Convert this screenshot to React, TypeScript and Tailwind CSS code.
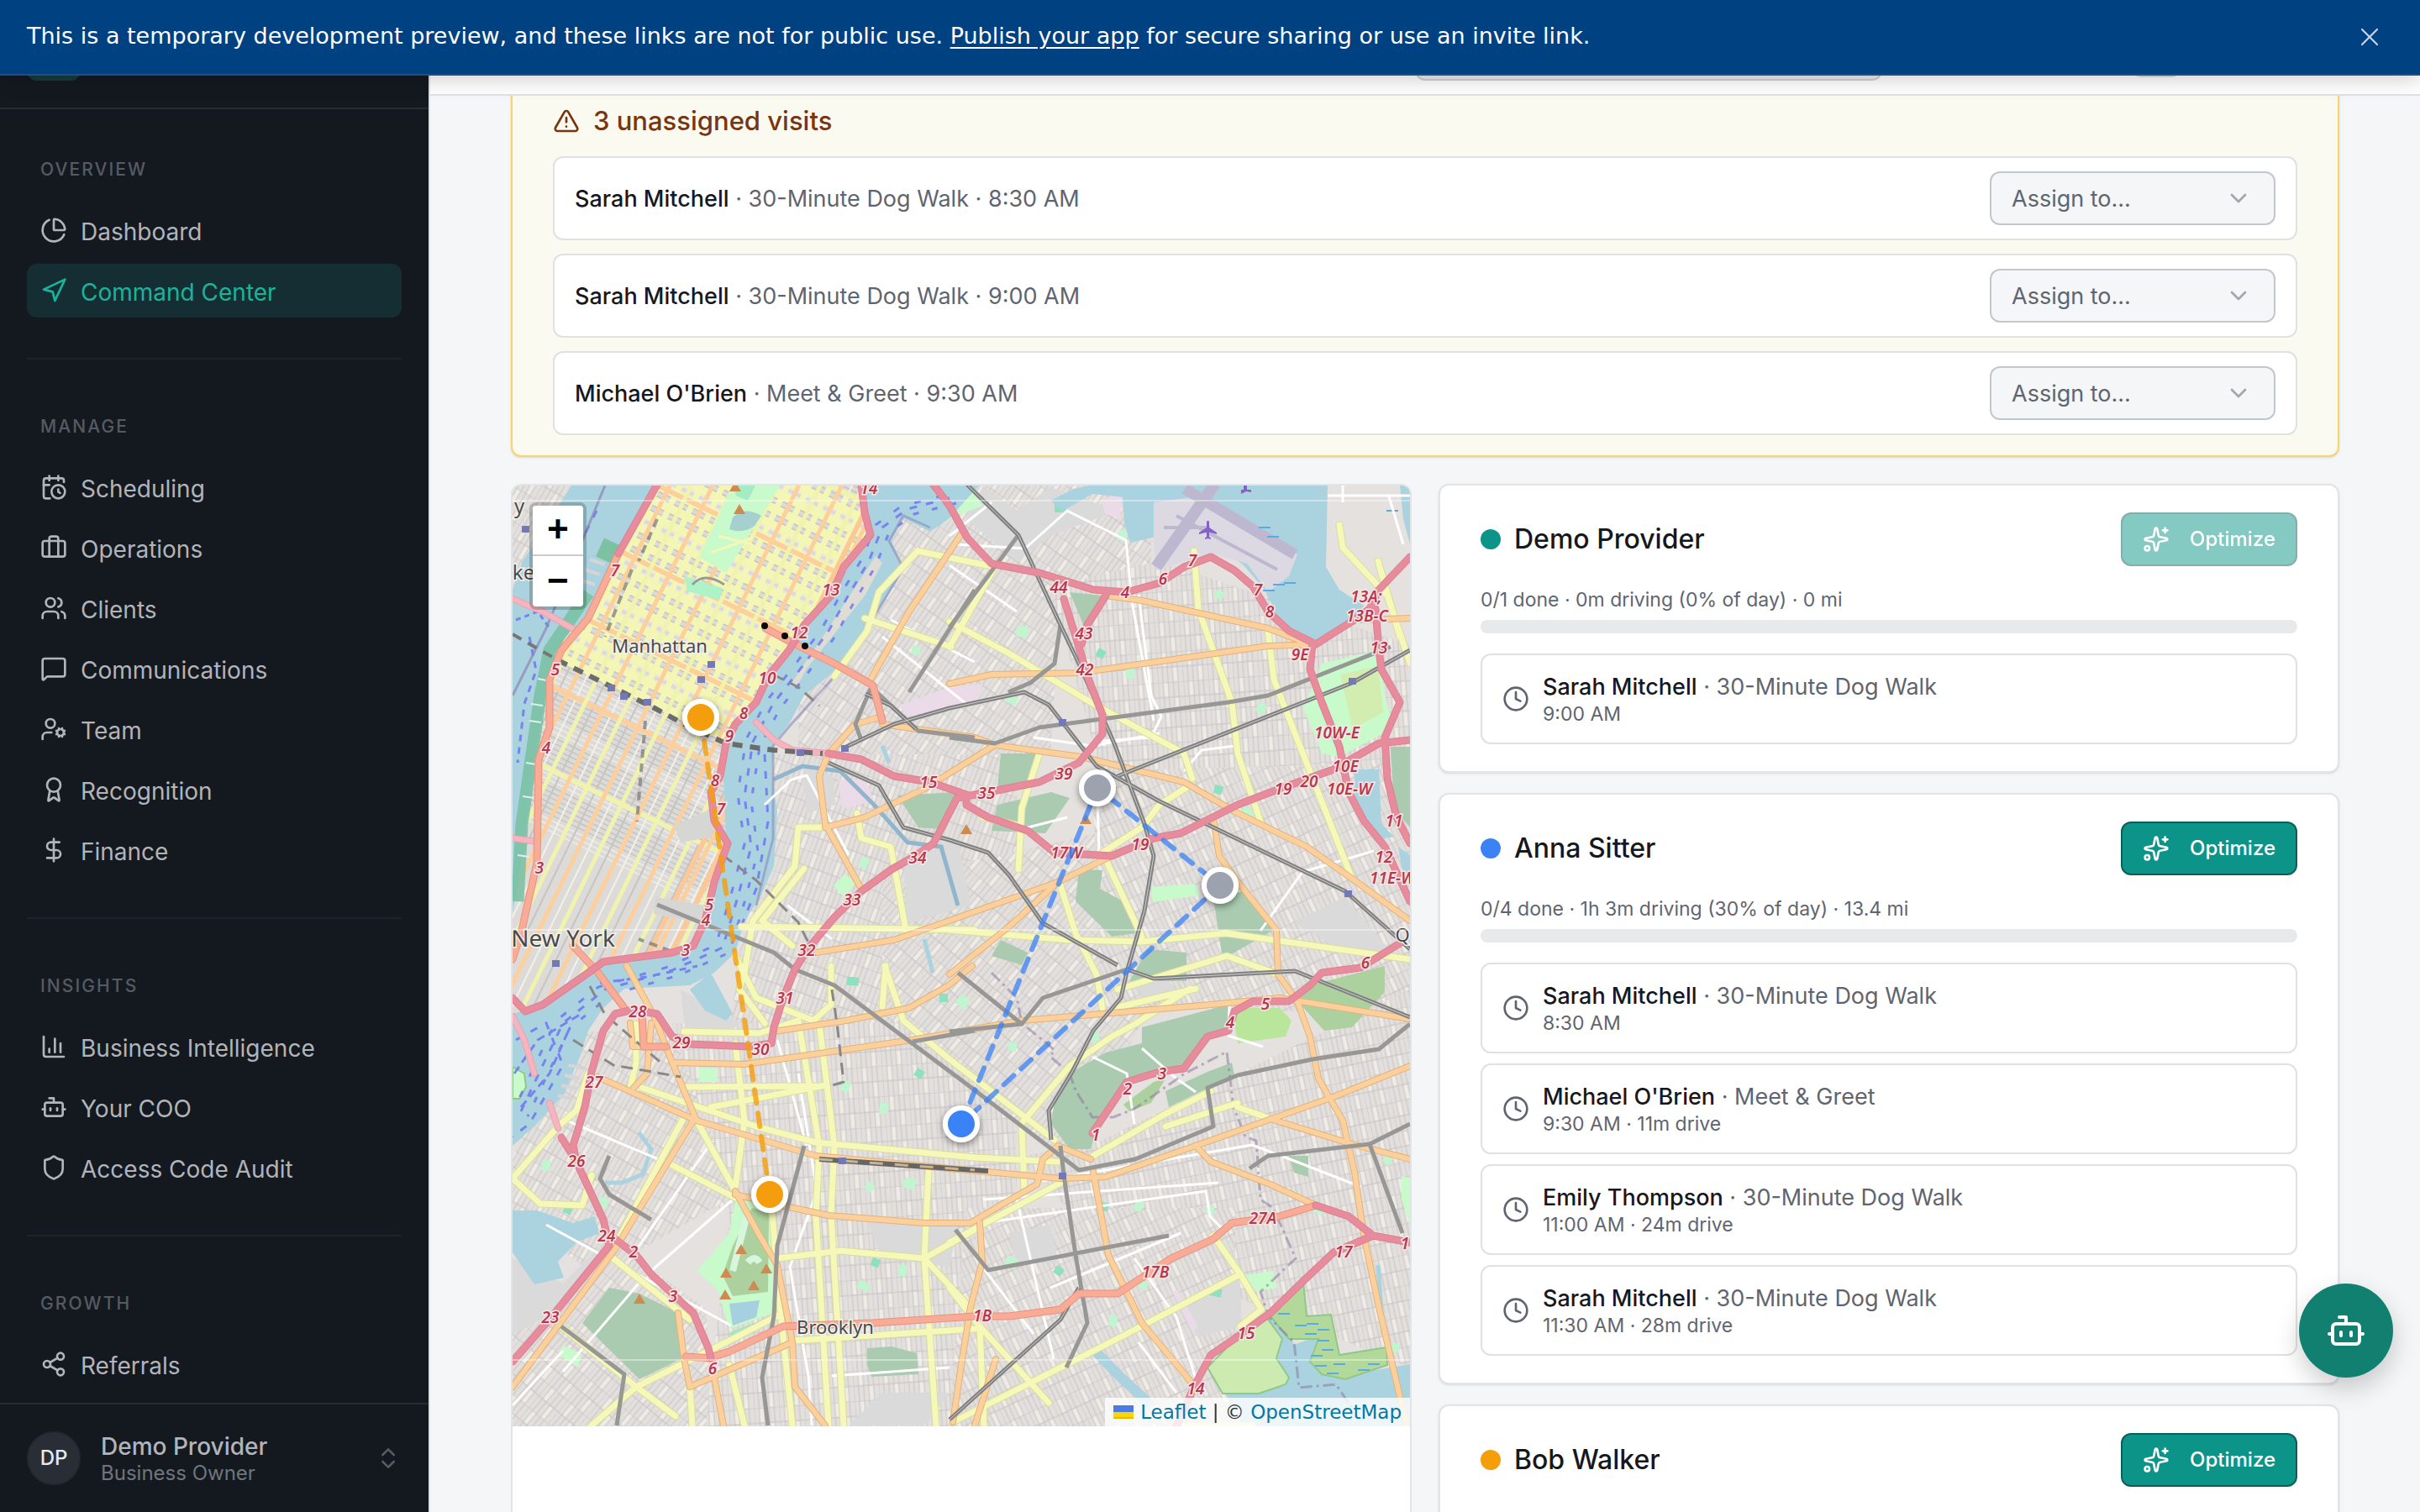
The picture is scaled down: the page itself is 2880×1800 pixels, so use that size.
import { useState } from "react";
import {
  Award, Bot, Briefcase, CalendarClock, ChartColumn, ChartPie, ChevronDown, ChevronsUpDown, Clock, DollarSign,
  MessageSquare, Navigation, Share2, Shield, Sparkles, TriangleAlert, UserCog, Users, X,
} from "lucide-react";

const NAV = [
  { title: "Overview", items: [
    { label: "Dashboard", icon: ChartPie },
    { label: "Command Center", icon: Navigation },
  ] },
  { title: "Manage", items: [
    { label: "Scheduling", icon: CalendarClock },
    { label: "Operations", icon: Briefcase },
    { label: "Clients", icon: Users },
    { label: "Communications", icon: MessageSquare },
    { label: "Team", icon: UserCog },
    { label: "Recognition", icon: Award },
    { label: "Finance", icon: DollarSign },
  ] },
  { title: "Insights", items: [
    { label: "Business Intelligence", icon: ChartColumn },
    { label: "Your COO", icon: Bot },
    { label: "Access Code Audit", icon: Shield },
  ] },
  { title: "Growth", items: [
    { label: "Referrals", icon: Share2 },
  ] },
];

const UNASSIGNED = [
  { client: "Sarah Mitchell", service: "30-Minute Dog Walk", time: "8:30 AM" },
  { client: "Sarah Mitchell", service: "30-Minute Dog Walk", time: "9:00 AM" },
  { client: "Michael O'Brien", service: "Meet & Greet", time: "9:30 AM" },
];

const PROVIDERS = [
  {
    name: "Demo Provider", dot: "bg-[#0d9488]", canOptimize: false,
    summary: "0/1 done · 0m driving (0% of day) · 0 mi",
    visits: [{ client: "Sarah Mitchell", service: "30-Minute Dog Walk", meta: "9:00 AM" }],
  },
  {
    name: "Anna Sitter", dot: "bg-[#3b82f6]", canOptimize: true,
    summary: "0/4 done · 1h 3m driving (30% of day) · 13.4 mi",
    visits: [
      { client: "Sarah Mitchell", service: "30-Minute Dog Walk", meta: "8:30 AM" },
      { client: "Michael O'Brien", service: "Meet & Greet", meta: "9:30 AM · 11m drive" },
      { client: "Emily Thompson", service: "30-Minute Dog Walk", meta: "11:00 AM · 24m drive" },
      { client: "Sarah Mitchell", service: "30-Minute Dog Walk", meta: "11:30 AM · 28m drive" },
    ],
  },
  { name: "Bob Walker", dot: "bg-[#f59e0b]", canOptimize: true, summary: "", visits: [] },
];

// Map geometry, in units of the map's 1068 x 1120 view box

const MANHATTAN =
  "172,0 415,0 424,51 397,97 369,143 333,196 297,242 272,277 258,311 251,349 254,422 240,479 226,537 204,556 108,571 36,618 0,629 0,510 12,442 26,327 44,220 62,181 97,147 130,78";

const WATER = [
  "70,0 172,0 130,78 97,147 62,181 44,220 26,327 12,442 0,510 0,124 12,90",
  "415,-1 424,51 397,97 369,143 333,196 297,242 272,277 258,311 251,349 254,422 240,479 226,537 204,556 108,571 86,583 36,618 0,629 0,786 26,763 61,725 79,683 90,649 108,622 133,599 211,595 240,580 265,556 276,518 294,491 311,453 315,388 308,345 311,307 329,284 347,250 394,212 419,173 444,135 465,101 451,66 465,39 497,55 520,39 556,-1",
  "0,863 29,863 72,878 97,870 104,890 76,901 54,924 61,943 26,951 0,913",
  "211,600 236,580 262,629 254,637 229,625",
  "725,-1 970,-1 968,97 984,124 1013,143 999,166 956,185 913,162 895,124 870,95 850,80 770,60 735,68 728,45",
  "640,18 668,4 690,-1 725,-1 728,14 690,10 655,30",
  "899,986 920,1000 930,1023 960,1012 950,1045 975,1062 1068,1046 1068,1120 870,1120 835,1055",
  "1002,338 1031,338 1034,403 1049,418 1027,422 1002,376",
  "1056,0 1068,0 1068,70 1060,40",
  "1054,430 1068,440 1068,470 1058,455",
];

const PARKS = [
  { fill: "#c8facc", pts: "262,0 318,0 254,104 222,85" },
  { fill: "#b5f0c0", pts: "204,108 254,120 247,135 211,124" },
  { fill: "#c8facc", pts: "531,35 560,24 545,5 511,45" },
  { fill: "#aacbaf", pts: "458,369 529,365 508,409 483,407" },
  { fill: "#aacbaf", pts: "581,319 627,319 616,353 577,361" },
  { fill: "#aacbaf", pts: "577,380 641,365 663,372 634,414 570,411" },
  { fill: "#aacbaf", pts: "674,457 702,458 699,480 734,499 741,533 713,537 670,495" },
  { fill: "#aacbaf", pts: "663,127 702,131 681,170" },
  { fill: "#aacbaf", pts: "834,491 870,483 906,529 845,564" },
  { fill: "#aacbaf", pts: "756,552 802,556 802,590 734,590" },
  { fill: "#aacbaf", pts: "581,541 613,556 606,571 570,560" },
  { fill: "#c8facc", pts: "941,265 963,212 1031,196 1038,250 1049,288 984,323 963,319" },
  { fill: "#d3edb0", pts: "985,225 1030,215 1036,270 1000,290" },
  { fill: "#aacbaf", pts: "1045,311 1068,311 1068,407 1049,384" },
  { fill: "#aacbaf", pts: "749,645 852,618 852,649 827,656 802,691 734,706 699,756 688,790 663,790 641,760 645,733 666,698 706,675 749,664" },
  { fill: "#aacbaf", pts: "777,721 827,698 856,687 859,702 781,740" },
  { fill: "#b9e69b", pts: "856,622 913,622 927,637 920,656 863,664" },
  { fill: "#add19e", pts: "949,595 1038,572 1038,603 999,645 966,649 934,614" },
  { fill: "#add19e", pts: "727,737 763,710 777,706 760,735 734,745" },
  { fill: "#aacbaf", pts: "924,798 947,798 947,823 930,818" },
  { fill: "#c8facc", pts: "265,851 308,851 311,985 258,1004 244,958 219,935 258,890" },
  { fill: "#add19e", pts: "285,860 305,866 304,960 262,965 250,940 262,905" },
  { fill: "#a0e8c0", pts: "258,1008 290,996 294,1004 262,1016" },
  { fill: "#aacbaf", pts: "115,955 151,962 197,985 202,1039 151,1064 83,997" },
  { fill: "#aacbaf", pts: "422,1027 451,1025 481,1033 483,1058 427,1061 422,1047" },
  { fill: "#c8facc", pts: "872,940 905,935 910,955 885,960" },
  { fill: "#c8facc", pts: "382,476 396,462 408,474 394,490" },
  { fill: "#c8facc", pts: "222,693 244,693 244,710 222,710" },
  { fill: "#c8facc", pts: "760,478 812,474 818,488 762,496" },
  { fill: "#c8facc", pts: "60,1024 82,1034 78,1050 56,1036" },
  { fill: "#c8facc", pts: "1058,822 1068,824 1068,880 1058,850" },
];

// shoreline greens that sit over the bay
const SHORE = [
  { fill: "#b2d99a", pts: "902,989 941,947 945,989 974,987 984,1035 1040,1026 1041,1047 991,1064 963,1058 949,1043 959,1016 924,1016" },
  { fill: "#cdebb0", pts: "895,987 916,1016 909,1039 924,1062 920,1070 888,1081 845,1081 827,1050 856,1020" },
  { fill: "#c8facc", pts: "0,692 14,700 16,716 8,730 0,730" },
];

// small greens scattered through the neighbourhoods
const SQUARES: [number, number][] = [
  [650, 27], [726, 58], [841, 130], [605, 172], [700, 200], [735, 222], [592, 254], [892, 264], [840, 362], [873, 388],
  [480, 196], [419, 448], [403, 590], [397, 714], [425, 835], [471, 829], [484, 700], [442, 740], [416, 952], [464, 933],
  [432, 925], [535, 612], [595, 668], [693, 655], [700, 858], [746, 856], [830, 862], [592, 923], [650, 935], [715, 993],
  [747, 950], [40, 808], [66, 862], [104, 852], [120, 408], [197, 417], [835, 960], [1043, 800], [1050, 1026], [958, 858], [513, 610],
];

const GREY_AREAS = [
  "465,440 530,420 545,500 470,520", "640,2 720,30 640,60 600,30", "200,600 270,640 260,650 205,645", "420,870 530,880 520,930 440,920",
  "0,920 60,950 110,900 60,980 0,1010", "800,980 865,942 868,1000 815,1014", "590,890 640,880 650,925 600,925", "735,580 770,576 790,600 750,612",
  "440,1080 520,1080 490,1119 400,1119", "560,0 640,60 600,90 540,40", "930,520 990,490 1050,560 980,550", "345,335 380,345 385,380 350,390",
];

const DISTRICTS = [
  { grid: "url(#grid-35)", pts: "400,0 760,0 760,120 650,170 640,320 340,320 340,250" },
  { grid: "url(#grid-n4)", pts: "640,120 770,90 1068,190 1068,350 700,340" },
  { grid: "url(#grid-20)", pts: "300,320 600,320 600,560 440,640 260,640" },
  { grid: "url(#grid-40)", pts: "440,470 760,400 760,620 660,800 440,650" },
  { grid: "url(#grid-n25)", pts: "690,340 1068,330 1068,630 700,620" },
  { grid: "url(#grid-n4)", pts: "190,640 470,640 600,760 600,870 220,860" },
  { grid: "url(#grid-30)", pts: "60,650 190,650 265,845 100,940 0,870 0,800" },
  { grid: "url(#grid-40)", pts: "0,1000 120,900 230,980 240,1120 0,1120" },
  { grid: "url(#grid-n4)", pts: "260,850 560,850 560,1120 230,1120" },
  { grid: "url(#grid-n12)", pts: "600,800 700,780 1068,600 1068,1050 700,900" },
  { grid: "url(#grid-n25)", pts: "540,860 860,860 860,1120 520,1120" },
  { grid: "url(#grid-n12)", pts: "940,860 1068,860 1068,1040 950,990" },
  { grid: "url(#grid-30)", pts: "0,0 70,0 12,90 0,124" },
];

const SECONDARY = [
  "811,78 816,147 856,258 863,319 891,403", "899,173 906,231 999,468", "520,162 591,200 688,258 799,319 809,349",
  "806,357 770,380 749,407 702,437 749,537", "627,319 606,384 602,457", "652,476 670,533 695,582 702,622",
  "520,529 663,541 749,543 849,533 1068,564", "984,47 988,74 1041,131 1068,212", "482,78 574,97 520,192", "419,158 522,192",
  "383,227 422,173 436,127 482,78", "372,407 340,407 336,453 286,518 276,579", "347,456 297,518 333,548", "272,525 550,529",
  "410,390 415,420 450,430 468,529", "443,572 465,637 520,683 645,779", "154,717 290,763 361,782 550,800 649,805",
  "201,716 361,715", "236,740 372,714", "204,650 294,652 340,637", "265,664 276,756 265,836", "340,637 365,786 361,870 376,1119",
  "365,641 383,786 379,867 394,1119", "265,560 290,610 358,637 379,618 379,572", "315,920 390,911 490,920 550,886",
  "495,817 490,920 504,1119", "490,920 550,985", "333,1018 550,1004", "520,955 556,1001 638,1092", "556,1001 561,1119",
  "524,1115 727,1012 866,939", "520,901 656,828", "834,893 866,939 891,981 866,1001", "606,763 609,840",
  "606,759 663,691 713,656 741,641 806,599", "691,798 777,748 831,721", "777,763 863,735", "716,622 813,599", "863,740 902,754",
  "0,825 54,763 76,744 90,700", "0,825 33,855 83,857 94,821", "111,913 211,993", "204,752 126,897", "254,1020 322,985",
  "308,855 319,985 333,1119", "58,1001 147,1073 194,1108", "94,1119 147,1073 254,1020", "258,1047 276,1119", "211,1073 214,1119",
  "147,641 147,687 140,717", "190,809 265,848", "219,756 265,840", "720,600 850,560 911,582", "1030,90 1056,180",
  "560,395 602,405", "440,620 444,572", "300,640 270,600 276,579", "800,1119 880,1119",
];

const PRIMARY = [
  "520,236 570,225 674,223 899,191 956,189", "706,131 749,137 899,170 949,189", "376,319 365,346 372,403 415,480",
  "440,284 550,300 574,309 677,323 799,353 859,388 945,430 999,468 1068,518", "426,231 472,150 534,58",
  "834,395 841,441 863,472 909,529 911,582 934,614 949,656 959,706 988,756 1002,817 1013,893 1031,978 1056,1085 1064,1120",
  "361,556 454,541 520,518 649,472 713,441", "520,582 591,525 649,472", "372,407 419,395 490,361 574,309",
  "101,704 219,756 361,798 520,813 652,825 706,823 813,786 974,729 1068,691", "813,786 831,805 902,832 956,857",
  "902,754 999,784 1068,802", "136,572 169,633 190,687 219,756", "265,840 294,893 315,928 333,1020 336,1073 372,1119",
  "215,756 122,909 0,1073", "265,844 329,859 376,869 490,878 545,878 577,859 624,832 631,802 649,786 688,802",
  "691,817 709,916 749,997 809,1069", "524,1115 534,1047 545,978 559,924 556,878", "190,687 276,689 476,660 606,637 831,618 913,610 1068,635",
  "311,650 397,637 472,622 519,595 547,572", "197,985 204,1039 211,1073 333,1020", "240,1062 251,1119", "140,640 143,668 183,668",
  "376,319 408,284 440,275", "165,640 160,700 144,717", "1010,160 1068,158", "550,1119 575,1040",
];

const TRUNK = [
  "126,81 90,158 58,196 44,231 44,288 31,326 29,449 11,529 0,564",
  "233,1039 258,1031 322,1001 429,997 550,989 591,989 652,981 674,962 720,962 749,943 784,920 834,897 856,878 913,870 956,857",
  "301,170 329,185 383,212 429,238 440,280", "72,548 101,579 133,622", "154,629 156,668 183,668", "206,1037 240,1039",
];

const MOTORWAY = [
  "172,-1 126,81",
  "415,-1 419,32 426,59 394,97 379,131 347,166 329,196 304,227 290,258 265,284 254,307 247,346 236,365 240,399 256,426 240,472 229,518 215,548 190,556 108,567 86,583 36,618 15,626 0,610",
  "0,1043 47,989 115,905 108,874 76,805 72,786 86,740 94,698 108,649 122,629 144,624 172,629 190,656 211,665 283,668 308,664 311,645 322,610 336,576 351,552 383,514 415,483 451,457 479,441 501,426 529,372 566,365 627,353 674,330 702,296 702,273 684,227 674,192 656,135",
  "376,319 415,326 454,346 497,353 540,368 540,380 566,395 613,411 645,437 713,441 763,420 795,414 863,380 913,361 977,338 1031,307 1068,303",
  "501,-1 520,24 541,62 570,93 627,104 691,124 731,127 770,116 799,97 831,85 859,101 881,120 899,150 924,173 956,189 981,173 999,162 1020,147 1031,124 1068,85",
  "952,189 949,219 963,258 984,311 995,365 1013,399 1038,430 1068,495",
  "1027,147 1031,196 1034,219 1056,258 1038,300 1041,349 1052,395 1068,426",
  "706,131 684,166 677,189",
  "690,771 713,737 731,710 770,698 799,694 827,656 852,649 859,626 881,614 924,614 949,595 963,580 1009,574 1056,545",
  "122,897 147,916 165,939 190,962 215,985 233,1027 236,1039",
  "813,1069 831,1035 859,1016 902,985 941,947 977,913 1024,893 1068,901",
  "1024,893 995,870 956,857", "58,776 76,805", "790,1120 813,1069",
];

const TUNNELS = ["0,135 36,150 76,173", "290,282 311,303 333,315 376,319", "0,632 14,660 26,700", "44,735 54,765", "0,420 30,424"];

const SUBWAY = [
  "520,300 574,307 627,288 852,258 899,250 1045,192", "652,166 645,212 616,235 590,246", "550,124 472,246", "520,169 602,59",
  "429,242 483,292 550,300", "426,242 408,284 415,303", "336,576 383,595 545,716 652,798 674,815 741,802 834,763 827,717 863,702 952,683 1031,671 1068,641",
  "520,650 606,641 631,610 731,576", "652,786 656,821 670,916 684,997 659,1050", "527,886 566,934 781,893",
  "877,813 899,798 1020,784 1068,760", "1020,784 1059,890", "115,798 104,825 115,844 165,874", "347,786 315,905 311,989 297,1062 304,1119",
  "58,1001 133,1058 124,1119", "476,662 550,649", "172,499 311,556 336,576", "606,641 530,580",
];

const RAIL = [
  "541,-1 602,59 652,166 674,212 716,307 752,403 763,441 752,506 731,579 724,610 691,649 666,698 638,744 641,779",
  "397,311 454,284 520,265 609,246 638,261 695,334 770,376 991,483 1068,552", "720,346 999,235 1068,196",
  "376,330 436,357 465,407 520,422 566,437 591,464 631,521 720,571", "731,576 763,587 931,578 1068,633", "674,955 652,993 520,1112",
  "420,248 450,262 480,290",
];

const WHITE_ROADS = [
  "735,127 763,280", "745,130 760,250 772,275 760,300 690,305", "527,70 610,75 660,30 730,65 736,127", "620,300 690,310 770,295",
  "695,340 698,437", "860,310 820,315 799,340", "660,395 602,410", "300,380 332,350 350,345 400,440", "327,500 380,540",
  "315,660 350,786", "340,700 362,840 330,930 352,1060 356,1119", "40,880 260,1000", "62,755 190,809", "120,900 212,765", "140,920 238,780",
  "165,935 262,850", "60,1055 150,950", "0,1095 60,1030", "630,828 880,785 920,800 1010,835", "560,850 840,830", "545,880 825,840 830,870 850,890",
  "640,955 700,930 795,890", "559,930 620,1010", "600,850 644,1040", "740,920 790,990 815,1070", "745,1020 790,1080", "749,670 790,706 813,722",
  "690,680 731,700 740,760", "853,620 852,655 893,668", "970,12 1068,12", "988,20 988,0", "1042,10 1060,70", "520,95 600,150",
  "440,180 540,260", "450,160 550,210", "890,530 940,460 1025,435", "520,60 570,20", "650,320 700,330", "380,1060 520,1050",
];

const TEXTS: { x: number; y: number; t: string }[] = [
  { x: 424, y: 3, t: "14" }, { x: 122, y: 101, t: "7" }, { x: 51, y: 219, t: "5" }, { x: 40, y: 312, t: "4" }, { x: 32, y: 455, t: "3" },
  { x: 379, y: 124, t: "13" }, { x: 341, y: 175, t: "12" }, { x: 303, y: 229, t: "10" }, { x: 275, y: 271, t: "8" }, { x: 258, y: 298, t: "9" },
  { x: 241, y: 351, t: "8" }, { x: 248, y: 385, t: "7" }, { x: 234, y: 499, t: "5" }, { x: 230, y: 517, t: "4" }, { x: 206, y: 553, t: "3" },
  { x: 495, y: 353, t: "15" }, { x: 482, y: 443, t: "34" }, { x: 404, y: 493, t: "33" }, { x: 350, y: 553, t: "32" }, { x: 650, y: 121, t: "44" },
  { x: 729, y: 127, t: "4" }, { x: 774, y: 111, t: "6" }, { x: 809, y: 89, t: "7" }, { x: 887, y: 124, t: "7" }, { x: 901, y: 150, t: "8" },
  { x: 1016, y: 132, t: "13A;" }, { x: 1017, y: 155, t: "13B-C" }, { x: 1031, y: 193, t: "13" }, { x: 680, y: 176, t: "43" }, { x: 681, y: 219, t: "42" },
  { x: 937, y: 201, t: "9E" }, { x: 981, y: 294, t: "10W-E" }, { x: 991, y: 334, t: "10E" }, { x: 948, y: 352, t: "20" }, { x: 917, y: 361, t: "19" },
  { x: 996, y: 361, t: "10E-W" }, { x: 656, y: 343, t: "39" }, { x: 564, y: 366, t: "35" }, { x: 659, y: 437, t: "17W" }, { x: 747, y: 427, t: "19" },
  { x: 1049, y: 399, t: "11" }, { x: 1037, y: 442, t: "12" }, { x: 1047, y: 467, t: "11E-W" }, { x: 1015, y: 568, t: "6" }, { x: 149, y: 626, t: "28" },
  { x: 201, y: 663, t: "29" }, { x: 295, y: 671, t: "30" }, { x: 324, y: 610, t: "31" }, { x: 97, y: 710, t: "27" }, { x: 76, y: 804, t: "26" },
  { x: 112, y: 893, t: "24" }, { x: 144, y: 912, t: "2" }, { x: 191, y: 965, t: "3" }, { x: 45, y: 990, t: "23" }, { x: 238, y: 1051, t: "6" },
  { x: 896, y: 617, t: "5" }, { x: 854, y: 639, t: "4" }, { x: 773, y: 700, t: "3" }, { x: 732, y: 718, t: "2" }, { x: 694, y: 773, t: "1" },
  { x: 893, y: 872, t: "27A" }, { x: 765, y: 936, t: "17B" }, { x: 559, y: 988, t: "1B" }, { x: 989, y: 912, t: "17" }, { x: 873, y: 1009, t: "15" },
  { x: 813, y: 1075, t: "14" }, { x: 1062, y: 902, t: "1" },
];

const PEAKS: [number, number][] = [
  [270, 28], [265, 1], [540, 409], [682, 397], [272, 909], [254, 937], [302, 932], [287, 952], [253, 963], [151, 968],
];

const STATIONS: [number, number][] = [
  [236, 213], [224, 231], [117, 241], [132, 251], [160, 258], [342, 318], [395, 313], [654, 282], [999, 233], [994, 486], [654, 822], [392, 804], [51, 569], [15, 52],
];

const FERRY = "520,15 470,28 440,50 424,90 400,130 375,175 345,215 310,260 286,305 276,370 284,430 268,490 250,550 190,577 110,600 60,640 36,690 10,745";

const MARSH: [number, number][] = [
  [918, 986], [938, 1000], [952, 998], [965, 1005], [950, 1010], [965, 1018], [970, 1029], [957, 1036], [962, 1048], [984, 1046], [1013, 1053], [1025, 1046], [976, 1057],
  [895, 50], [905, 61], [900, 125], [912, 118], [925, 116], [1047, 30],
];

const MARKERS = [
  { x: 224, y: 276, color: "#f59e0b" },
  { x: 306, y: 844, color: "#f59e0b" },
  { x: 534, y: 760, color: "#3b82f6" },
  { x: 842, y: 476, color: "#9ca3af" },
  { x: 696, y: 360, color: "#9ca3af" },
];

// avenues and cross streets of Manhattan, cut to the island's outline
const AVENUES = Array.from({ length: 22 }, (_, i) => i * 23 - 130);
const STREETS = Array.from({ length: 34 }, (_, i) => i * 18 - 150);

function BlockGrid({ id, angle }: { id: string; angle: number }) {
  return (
    <pattern id={id} width="30" height="36" patternUnits="userSpaceOnUse" patternTransform={`rotate(${angle})`}>
      <rect width="30" height="36" fill="#e2dfdd" />
      <rect x="6" y="1" width="6" height="16" fill="#efebe5" />
      <rect x="18" y="19" width="6" height="16" fill="#efebe5" />
      <path d="M0 0V36M6 0V36M12 0V36M18 0V36M24 0V36M0 0H30M0 18H30" stroke="#c6c4c3" strokeWidth="1" fill="none" />
    </pattern>
  );
}

function Roads({ lines, casing, fill, width }: { lines: string[]; casing: string; fill: string; width: number }) {
  return (
    <g fill="none" strokeLinejoin="round" strokeLinecap="round">
      {lines.map(p => <polyline key={`c${p}`} points={p} stroke={casing} strokeWidth={width + 2} />)}
      {lines.map(p => <polyline key={p} points={p} stroke={fill} strokeWidth={width} />)}
    </g>
  );
}

function CityMap() {
  return (
    <svg viewBox="0 0 1068 1120" preserveAspectRatio="xMidYMid slice" className="block h-[1120px] w-full" role="img" aria-label="Visit routes">
      <defs>
        <BlockGrid id="grid-35" angle={35} />
        <BlockGrid id="grid-40" angle={40} />
        <BlockGrid id="grid-30" angle={30} />
        <BlockGrid id="grid-20" angle={20} />
        <BlockGrid id="grid-n4" angle={-4} />
        <BlockGrid id="grid-n12" angle={-12} />
        <BlockGrid id="grid-n25" angle={-25} />
        <clipPath id="island"><polygon points={MANHATTAN} /></clipPath>
        <filter id="pin-shadow" x="-50%" y="-50%" width="200%" height="200%">
          <feDropShadow dx="0" dy="3" stdDeviation="4" floodColor="#000" floodOpacity="0.45" />
        </filter>
      </defs>

      <rect width="1068" height="1120" fill="#e4e1de" />
      {DISTRICTS.map(d => <polygon key={d.pts} points={d.pts} fill={d.grid} />)}
      {GREY_AREAS.map(p => <polygon key={p} points={p} fill="#dadada" />)}
      <polygon points="700,18 728,5 722,40 706,34" fill="#ebdbe8" />
      <polygon points="388,350 420,350 430,375 392,385" fill="#ebdbe8" />
      <polygon points="460,262 520,240 560,236 550,258 470,275" fill="#ebdbe8" />
      <polygon points="785,960 792,958 816,1002 808,1006" fill="#ebdbe8" />
      <polygon points="975,210 1010,200 1014,212 980,222" fill="#ebdbe8" />
      {PARKS.map(p => <polygon key={p.pts} points={p.pts} fill={p.fill} />)}
      {SQUARES.map(([x, y], i) => (
        <rect key={`${x}-${y}`} x={x - 5} y={y - 5} width={i % 3 ? 10 : 14} height={i % 2 ? 13 : 10} fill={i % 4 ? "#c0f5cf" : "#8fe0bf"} transform={`rotate(${(i * 17) % 40} ${x} ${y})`} />
      ))}

      {/* island streets */}
      <g clipPath="url(#island)">
        <polygon points={MANHATTAN} fill="#dddbd8" />
        <g transform="rotate(26 172 300)" fill="none">
          {STREETS.map((y, i) => (
            <path key={y} d={`M-200 ${y}H520M-200 ${y + 6}H520M-200 ${y + 12}H520`} stroke={i % 3 ? "#c6c4c2" : "#efece6"} strokeWidth="1.500" />
          ))}
          {AVENUES.map((x, i) => <path key={x} d={`M${x + 11} -300V800`} stroke={i % 2 ? "#c6c4c2" : "#f4f1ea"} strokeWidth="2" />)}
          {STREETS.filter(y => y > -60 && y < 270).map(y => <path key={y} d={`M-60 ${y}H420`} stroke="#f3f6b4" strokeWidth="10" />)}
          {AVENUES.map(x => <path key={x} d={`M${x + 11} -60V270`} stroke="#f3f6b4" strokeWidth="7" />)}
          {STREETS.filter((_, i) => i % 5 === 0).map(y => <path key={y} d={`M-200 ${y}H520`} stroke={y > 300 || y < 0 ? "#eff3ad" : "#fccf9c"} strokeWidth="6" />)}
          {AVENUES.map((x, i) => <path key={x} d={`M${x} -300V800`} stroke={i % 2 ? "#eff3ad" : "#fccf9c"} strokeWidth="5" />)}
          <path d="M300 -300V800M346 -300V420M276 -300V560" stroke="#fcc996" strokeWidth="6" />
        </g>
        <polygon points="262,0 318,0 254,104 222,85" fill="#c8facc" />
        <path d="M262 38q14-14 34-2l-8 12q-14 10-30 4z" fill="#a6cfd0" />
        <path d="M236 80l50-18M245 60l40 10" stroke="#f4f7b6" strokeWidth="3" />
        <polygon points="262,-2 290,-2 280,18 266,12" fill="#a4ecc4" />
        <polygon points="204,108 250,122 246,136 208,126" fill="#aef2c8" />
        <path d="M214 118q14-16 38 0" stroke="#9a9a9a" strokeWidth="3" fill="none" />
        <polygon points="192,405 236,385 238,418 200,425" fill="#d6d6d4" />
        <polygon points="170,490 230,500 220,520 168,510" fill="#d6d6d4" />
        <path d="M158 280L148 400M172 40L150 90M142 100L110 180M204 560L150 540" stroke="#777" strokeWidth="4" strokeDasharray="10 7" opacity="0.7" />
      </g>

      {WATER.map(p => <polygon key={p} points={p} fill="#aad3df" />)}
      {SHORE.map(p => <polygon key={p.pts} points={p.pts} fill={p.fill} stroke="#8fc98a" strokeWidth="2" />)}
      <g fill="none" stroke="#aad3df" strokeWidth="5">
        <polyline points="690,1027 722,1060 760,1095" strokeWidth="12" />
        <polyline points="310,350 345,334 390,340 430,380 470,425 510,430 530,500" stroke="#8fb6cc" />
        <polyline points="150,770 165,790 155,820 130,830 110,830" />
        <polyline points="1030,928 1036,1010" />
        <polyline points="440,310 448,330" />
        <polyline points="490,540 500,580" />
      </g>
      {/* river islands and piers */}
      <polygon points="432,84 440,92 420,130 350,218 338,240 330,238 372,176" fill="#dedcd5" />
      <g stroke="#d5d5d5" strokeWidth="4">
        <path d="M66 690L84 694M62 702L80 706M58 714L76 718M54 726L70 730M92 88L110 94M86 100L104 106M80 112L98 118" />
        <path d="M20 905L50 912M16 925L44 930M60 640L72 650" stroke="#aad3df" />
      </g>
      <polyline points="90,128 44,196 33,250 11,403 6,495" fill="none" stroke="#79bfa2" strokeWidth="15" opacity="0.85" />
      <rect x="103" y="66" width="22" height="24" fill="#7cc2a2" transform="rotate(24 114 78)" />
      <g stroke="#dfeeee" strokeWidth="2"><path d="M22 260L36 262M20 280L34 282M16 330L28 332M12 370L26 372M6 440L20 442M30 230L40 232" /></g>

      <g fill="none" stroke="#6b70f2" strokeWidth="3" strokeDasharray="9 11" opacity="0.8">
        <polyline points={FERRY} />
        <polyline points={FERRY} transform="translate(8 6)" strokeDasharray="7 16" />
        <polyline points={FERRY} transform="translate(-8 -3)" strokeDasharray="8 19" />
        <polyline points="300,320 304,400 290,480 270,530" />
        <polyline points="4,660 40,640 60,690 20,760 0,775" />
        <polyline points="2,700 30,660 80,630" strokeDasharray="10 6" />
        <polyline points="10,740 44,700 66,650" strokeDasharray="10 6" />
        <polyline points="104,592 160,585 220,572" strokeDasharray="8 8" />
        <polyline points="4,160 30,150 44,170" strokeDasharray="6 5" />
        <polyline points="20,180 28,220 14,260 6,330" strokeDasharray="8 7" />
        <polyline points="100,30 60,110" />
      </g>
      <polyline points="110,0 40,170 0,250" fill="none" stroke="#8c84b4" strokeWidth="3" opacity="0.7" />
      <polyline points="497,50 465,36 448,66 465,98 440,140 395,214 330,286 310,310 310,420 290,500" fill="none" stroke="#8c8cba" strokeWidth="3" opacity="0.6" />

      {/* airport */}
      <polygon points="763,20 824,12 934,82 924,108 899,127 874,93 831,81 766,101 763,70" fill="#dcd9e2" />
      <g stroke="#bdb8cf" fill="none">
        <path d="M766 97L836 -2" strokeWidth="14" />
        <path d="M800 4L931 82" strokeWidth="13" />
        <path d="M775 50L830 50M790 36L910 100" strokeWidth="4" />
      </g>
      <g transform="translate(815 40)" fill="#8461c4">
        <path d="M23 18v-2l-9-6V3.500c0-.83-.67-1.500-1.500-1.500S11 2.670 11 3.500V10l-9 6v2l9-2.500V21l-2 1.500V24l3.500-1 3.500 1v-1.500L14 21v-5.500l9 2.500z" />
        <path d="M58-33l-6 3v-5h3v-6h4v6h5v3z" />
      </g>
      <g stroke="#5aaae8" strokeWidth="2">{MARSH.map(([x, y]) => <path key={`${x}-${y}`} d={`M${x - 7} ${y}h14`} />)}</g>
      <path d="M258 974l36-4-4 20-28 10z" fill="#a6cfe0" />
      <path d="M262 935q10-40 18-70M280 925q8-10 14 0" stroke="#d6f7dd" strokeWidth="8" fill="none" />

      <g fill="none" stroke="#fff" strokeWidth="3" strokeLinejoin="round">{WHITE_ROADS.map(p => <polyline key={p} points={p} />)}</g>
      <g fill="none" stroke="#8a6f9b" strokeWidth="3" strokeDasharray="14 5 3 5" opacity="0.5">
        <polyline points="570,580 600,610 606,640 645,672 640,680 663,700 670,720 690,752 715,752 740,742 800,700 850,674 858,740 872,775 885,780 890,850 905,860 932,920 890,960 900,990 930,1020 936,1074 980,1070 1000,1100" />
      </g>
      <Roads lines={SECONDARY} casing="#d9de9c" fill="#f5f8b8" width={7} />
      <Roads lines={PRIMARY} casing="#e2b27a" fill="#fcd09c" width={6} />
      <Roads lines={TUNNELS} casing="#eea0ae" fill="#f3b6c0" width={6} />
      <g fill="none" stroke="#979795" strokeWidth="5" strokeLinejoin="round">{SUBWAY.map(p => <polyline key={p} points={p} />)}</g>
      <g fill="none" strokeLinejoin="round">
        {RAIL.map(p => <polyline key={p} points={p} stroke="#808080" strokeWidth="5" />)}
        {RAIL.map(p => <polyline key={p} points={p} stroke="#cfcfcf" strokeWidth="1" />)}
        <polyline points="365,802 550,815 566,816" stroke="#666" strokeWidth="6" />
        <polyline points="365,802 550,815" stroke="#c9b48c" strokeWidth="3" strokeDasharray="16 14" />
        <polyline points="0,177 54,208" stroke="#777" strokeWidth="4" strokeDasharray="12 9" />
        <polyline points="54,208 169,265 204,284 254,307 311,315 369,319" stroke="#6c6c6c" strokeWidth="6" strokeDasharray="12 9" />
        <polyline points="340,190 380,212 426,236" stroke="#777" strokeWidth="5" strokeDasharray="30 8" />
        <polyline points="72,660 120,690 200,704" stroke="#888" strokeWidth="3" strokeDasharray="14 8" />
        <polyline points="92,596 110,630 180,690" stroke="#888" strokeWidth="3" strokeDasharray="14 8" />
        <polyline points="380,600 386,640 394,710 374,716" stroke="#888" strokeWidth="3" strokeDasharray="14 8" />
        <polyline points="250,440 290,470 340,520 360,560" stroke="#888" strokeWidth="3" strokeDasharray="14 8" />
        <polyline points="310,225 340,240 365,262" stroke="#888" strokeWidth="3" strokeDasharray="14 8" />
      </g>
      <Roads lines={TRUNK} casing="#ea917c" fill="#f8ab96" width={7} />
      <Roads lines={MOTORWAY} casing="#e07f92" fill="#e68c9c" width={7} />
      <g fill="#0b0b0b"><circle cx="300" cy="167" r="4" /><circle cx="324" cy="179" r="4" /><circle cx="348" cy="191" r="4" /></g>

      {STATIONS.map(([x, y]) => <rect key={`${x}-${y}`} x={x - 4} y={y - 4} width="9" height="8" fill="#7279b4" />)}
      {PEAKS.map(([x, y]) => <path key={`${x}-${y}`} d={`M${x - 7} ${y + 6}h14l-7-12z`} fill="#cf8a52" />)}

      <g
        className="[font-family:'Noto_Sans',sans-serif] text-[19px] font-semibold italic"
        fill="#b8394f" stroke="#f6e9e6" strokeWidth="3" paintOrder="stroke" textAnchor="middle"
      >
        {TEXTS.map(l => <text key={`${l.x}-${l.y}`} x={l.x} y={l.y + 7}>{l.t}</text>)}
      </g>
      <g className="[font-family:'Noto_Sans',sans-serif]" fill="#4a4a4a" stroke="#f3f1ec" strokeWidth="3" paintOrder="stroke" textAnchor="middle">
        <text x="175" y="199" className="text-[22px]">Manhattan</text>
        <text x="384" y="1010" className="text-[22px]">Brooklyn</text>
        <text x="60" y="549" className="text-[28px]">New York</text>
        <text x="8" y="33" className="text-[24px]">y</text>
        <text x="13" y="112" className="text-[24px]">ke</text>
        <text x="1059" y="543" className="text-[22px]">Q</text>
      </g>
      <path d="M0 18H1068M0 529H1068M0 1041H1068" stroke="#fff" strokeWidth="1" opacity="0.8" />

      {/* routes */}
      <g fill="none" strokeWidth="6" strokeLinecap="round" strokeLinejoin="round" strokeDasharray="16 12">
        <polyline points="224,276 306,844" stroke="#f59e0b" opacity="0.8" />
        <polyline points="534,760 696,360 842,476 534,760" stroke="#3b82f6" opacity="0.75" />
      </g>
      {MARKERS.map(m => (
        <circle key={`${m.x}-${m.y}`} cx={m.x} cy={m.y} r="19" fill={m.color} stroke="#fff" strokeWidth="6" filter="url(#pin-shadow)" />
      ))}
    </svg>
  );
}

function OptimizeButton({ disabled }: { disabled: boolean }) {
  return (
    <button
      disabled={disabled}
      className="flex h-16 items-center gap-6 rounded-xl border-2 border-[#0b5f58] bg-[#0d9488] px-6 text-2xl font-medium text-white disabled:opacity-50"
    >
      <Sparkles className="h-8 w-8" />
      Optimize
    </button>
  );
}

function Sidebar() {
  const [active, setActive] = useState("Command Center");
  return (
    <aside className="flex w-[512px] shrink-0 flex-col border-r-2 border-[#dfe1e4] bg-[#141920] text-[#b1b4ba]">
      <div className="flex h-[130px] shrink-0 items-center border-b-2 border-[#262b33] px-8">
        <div className="h-16 w-16 rounded-xl bg-[#173c3e]" />
      </div>
      <nav className="min-h-0 flex-1 overflow-hidden px-8 pt-14">
        {NAV.map((group, i) => (
          <section key={group.title} className={i > 0 ? "mt-12 border-t-2 border-[#1e232b] pt-16" : ""}>
            <h2 className="mb-6 px-4 text-[21px] leading-8 font-medium tracking-widest text-[#565b63] uppercase">{group.title}</h2>
            <div className="space-y-2">
              {group.items.map(({ label, icon: Icon }) => (
                <a
                  key={label}
                  href="#"
                  onClick={() => setActive(label)}
                  className={`flex h-16 items-center gap-4 rounded-xl px-4 text-[28px] ${active === label ? "bg-[#152e33] text-[#1bb39c]" : ""}`}
                >
                  <Icon className="h-8 w-8 shrink-0" />
                  <span className="pt-[3px]">{label}</span>
                </a>
              ))}
            </div>
          </section>
        ))}
      </nav>
      <button className="flex h-[130px] shrink-0 items-center border-t-2 border-[#262b33] px-8 text-left">
        <span className="flex h-16 w-16 items-center justify-center rounded-full border-2 border-[#242931] bg-[#292e36] text-2xl font-medium text-[#e8e9eb]">DP</span>
        <span className="ml-6 flex-1">
          <span className="block text-[28px] leading-9 font-medium">Demo Provider</span>
          <span className="block text-2xl leading-7 text-[#70757d]">Business Owner</span>
        </span>
        <ChevronsUpDown className="h-8 w-8 text-[#565b63]" />
      </button>
    </aside>
  );
}

export default function App() {
  const [showBanner, setShowBanner] = useState(true);
  return (
    <div className="relative flex h-screen overflow-hidden bg-[#f5f6f8] [font-family:Inter,sans-serif] text-[#16181d]">
      {showBanner && (
        <div className="absolute inset-x-0 top-0 z-30 flex h-[90px] items-center justify-between border-b-2 border-[#1d5089] bg-[#004182] px-8 [font-family:'DejaVu_Sans',sans-serif] text-[27px] text-white shadow-[0_4px_24px_rgba(0,0,0,0.2)]">
          <p className="pb-[2px]">
            This is a temporary development preview, and these links are not for public use.{" "}
            <a href="#" className="underline underline-offset-4">Publish your app</a> for secure sharing or use an invite link.
          </p>
          <button aria-label="Close" onClick={() => setShowBanner(false)} className="px-[10px] text-[#c3d3e4]">
            <X className="h-9 w-9" strokeWidth={1.5} />
          </button>
        </div>
      )}

      <Sidebar />

      <div className="flex min-w-0 flex-1 flex-col">
        <header className="z-10 flex h-[114px] shrink-0 items-center justify-end gap-[296px] border-b-2 border-[#dfe1e4] bg-white pr-[284px]">
          <input aria-label="Search" className="h-20 w-[556px] rounded-xl border-2 border-[#cfd2d6] bg-[#eceef0]" />
          <div className="h-[72px] w-[60px] rounded-xl bg-[#dcdee1]" />
        </header>

        <main className="-mt-[14px] min-h-0 flex-1 space-y-8 overflow-hidden px-24">
          <section className="rounded-xl border-2 border-[#f8d46a] bg-[#fafaf0] px-12 py-6 shadow-sm">
            <h2 className="mb-6 flex h-9 items-center gap-4 text-[31px] font-medium text-[#78350f]">
              <TriangleAlert className="h-8 w-8" />
              3 unassigned visits
            </h2>
            <div className="space-y-4">
              {UNASSIGNED.map(v => (
                <div key={v.time} className="flex items-center justify-between rounded-xl border-2 border-[#dfe1e3] bg-white px-6 py-4 text-[27px]">
                  <p className="pt-[3px] text-[#5f6570]">
                    <span className="font-medium text-[#16181d]">{v.client}</span> · {v.service} · {v.time}
                  </p>
                  <div className="relative">
                    <select
                      aria-label={`Assign ${v.client} ${v.time}`}
                      className="block h-16 w-[340px] appearance-none rounded-xl border-2 border-[#c3c6cb] bg-[#f5f6f8] px-6 pt-[3px] text-[27px] text-[#5f6570]"
                    >
                      <option>Assign to...</option>
                    </select>
                    <ChevronDown className="pointer-events-none absolute top-4 right-7 h-8 w-8 text-[#a2a6ad]" />
                  </div>
                </div>
              ))}
            </div>
          </section>

          <div className="grid grid-cols-2 gap-8">
            <div className="overflow-hidden rounded-xl border-2 border-[#e2e4e7] bg-white">
              <div className="relative">
                <CityMap />
                <div className="absolute top-5 left-5 flex flex-col overflow-hidden rounded-lg border-4 border-black/20 bg-clip-padding text-[44px] leading-none font-bold text-black [font-family:'Liberation_Mono',monospace]">
                  <button aria-label="Zoom in" className="flex h-[60px] w-[60px] items-center justify-center border-b-2 border-[#ccc] bg-white pt-[3px]">+</button>
                  <button aria-label="Zoom out" className="flex h-[60px] w-[60px] items-center justify-center bg-white pt-[3px]">−</button>
                </div>
                <div className="absolute right-0 bottom-0 flex h-[34px] items-center gap-2 bg-white/80 px-[10px] [font-family:'DejaVu_Sans',sans-serif] text-[23px] text-[#333]">
                  <svg viewBox="0 0 12 8" className="h-4 w-6"><path fill="#4C7BE1" d="M0 0h12v4H0z" /><path fill="#FFD500" d="M0 4h12v3H0z" /><path fill="#E0BC00" d="M0 7h12v1H0z" /></svg>
                  <span>
                    <a href="#" className="text-[#0078a8]">Leaflet</a> | © <a href="#" className="text-[#0078a8]">OpenStreetMap</a>
                  </span>
                </div>
              </div>
            </div>

            <div className="space-y-6">
              {PROVIDERS.map(p => (
                <section key={p.name} className="rounded-xl border-2 border-[#e2e4e7] bg-white px-12 py-8 shadow-sm">
                  <div className="flex items-center">
                    <span className={`mr-4 h-6 w-6 rounded-full ${p.dot}`} />
                    <h3 className="flex-1 text-[32px] font-medium">{p.name}</h3>
                    <OptimizeButton disabled={!p.canOptimize} />
                  </div>
                  <p className="mt-6 h-8 text-[23px] leading-8 text-[#5f6570]">{p.summary}</p>
                  <div className="mt-2 h-4 rounded-lg bg-[#e8e9eb]" />
                  <div className="mt-6 space-y-3">
                    {p.visits.map(v => (
                      <div key={v.meta} className="flex items-center gap-4 rounded-xl border-2 border-[#dfe1e3] px-6 py-5 text-[#5f6570]">
                        <Clock className="h-8 w-8 shrink-0" />
                        <div>
                          <p className="text-[27px] leading-9">
                            <span className="font-medium text-[#16181d]">{v.client}</span> · {v.service}
                          </p>
                          <p className="text-[23px] leading-7">{v.meta}</p>
                        </div>
                      </div>
                    ))}
                  </div>
                </section>
              ))}
            </div>
          </div>
        </main>
      </div>

      <button aria-label="Open assistant" className="absolute right-8 bottom-40 z-20 flex h-28 w-28 items-center justify-center rounded-full bg-[#128070] text-white shadow-[0_12px_30px_rgba(0,0,0,0.2)]">
        <Bot className="h-12 w-12" />
      </button>
    </div>
  );
}
